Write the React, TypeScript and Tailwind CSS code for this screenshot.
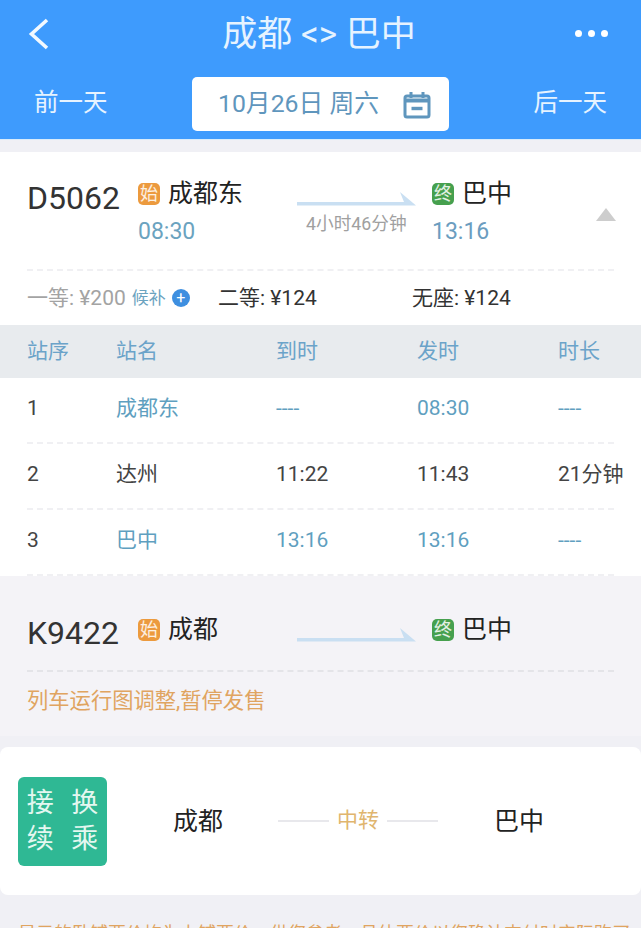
const FONT = "font-['Roboto','Noto_Sans_CJK_SC',sans-serif]";

function Badge({ label, color }: { label: string; color: string }) {
  return (
    <span
      className={`flex h-[22px] w-[22px] items-center justify-center rounded-[5px] text-[18px] leading-none text-white/85 ${color}`}
    >
      {label}
    </span>
  );
}

function Arrow() {
  return (
    <svg width="120" height="16" viewBox="0 0 120 16" className="block">
      <path d="M0 12H107L103 2L119 15.5H0Z" fill="#c9dff2" />
    </svg>
  );
}

function BackIcon() {
  return (
    <svg width="22" height="32" viewBox="0 0 22 32" fill="none" className="block">
      <path d="M19 2L3.5 16L19 30" stroke="#f2f9ff" strokeWidth="3.6" />
    </svg>
  );
}

function CalendarIcon() {
  return (
    <svg width="28" height="28" viewBox="0 0 28 28" fill="none" className="block">
      <rect x="2" y="5" width="24" height="21" rx="2" stroke="#5f96bd" strokeWidth="3" />
      <path d="M2 9.5H26" stroke="#5f96bd" strokeWidth="4" />
      <path d="M8 1V7M20 1V7" stroke="#5f96bd" strokeWidth="3" />
      <path d="M8.5 17.5H19.5" stroke="#5f96bd" strokeWidth="3.4" />
    </svg>
  );
}

function Dashed() {
  return <div className="mx-[27px] border-t-2 border-dashed border-[#f0f0f3]" />;
}

const stops = [
  { no: "1", name: "成都东", arrive: "----", depart: "08:30", stay: "----", first: true },
  { no: "2", name: "达州", arrive: "11:22", depart: "11:43", stay: "21分钟", first: false },
  { no: "3", name: "巴中", arrive: "13:16", depart: "13:16", stay: "----", first: true },
];

export default function App() {
  return (
    <div className={`h-[928px] w-[641px] overflow-hidden bg-[#f0f0f5] ${FONT}`}>
      {/* Header */}
      <div className="h-[140px] border-b border-[#d8ecfb] bg-[#3e9bfd] text-white">
        <div className="grid h-[77px] grid-cols-[1fr_auto_1fr] items-center px-[33px]">
          <div className="-ml-[5px] -mt-[10px]">
            <BackIcon />
          </div>
          <div className="-ml-[3px] -mt-[8px] text-[35px] leading-none text-[#e6f3ff]">成都 &lt;&gt; 巴中</div>
          <div className="-mt-[10px] flex justify-end gap-[6px]">
            <span className="h-[7px] w-[7px] rounded-full bg-white" />
            <span className="h-[7px] w-[7px] rounded-full bg-white" />
            <span className="h-[7px] w-[7px] rounded-full bg-white" />
          </div>
        </div>
        <div className="flex items-start justify-between px-[34px] text-[#e6f3ff]">
          <span className="mt-[11px] text-[24.5px] leading-[30px]">前一天</span>
          <div className="flex h-[54px] w-[257px] items-center rounded-[5px] bg-white pl-[26px] text-[24.8px] leading-none text-[#5f96bd]">
            <span>10月26日 周六</span>
            <span className="ml-[24px] mt-[2px]">
              <CalendarIcon />
            </span>
          </div>
          <span className="mt-[11px] text-[24.5px] leading-[30px]">后一天</span>
        </div>
      </div>

      {/* D5062 */}
      <div className="mt-[12px] bg-white">
        <div className="grid h-[117px] grid-cols-[111px_159px_135px_1fr] pl-[27px]">
          <div className="pt-[27px] text-[32px] leading-[38px] text-[#333]">D5062</div>
          <div className="pt-[27px]">
            <div className="flex items-center gap-[8px] text-[25px] leading-[30px] text-[#222]">
              <Badge label="始" color="bg-[#ec9a3e]" />
              成都东
            </div>
            <div className="mt-[9px] text-[23px] leading-[28px] text-[#6ba3bf]">08:30</div>
          </div>
          <div className="pt-[38px]">
            <Arrow />
            <div className="mt-[7px] text-[17.7px] leading-[22px] text-[#a0a0a0]">
              <span className="ml-[9px]">4小时46分钟</span>
            </div>
          </div>
          <div className="relative pt-[27px]">
            <div className="flex items-center gap-[8px] text-[25px] leading-[30px] text-[#222]">
              <Badge label="终" color="bg-[#46a04e]" />
              巴中
            </div>
            <div className="mt-[9px] text-[23px] leading-[28px] text-[#6b9dbf]">13:16</div>
            <div className="absolute right-[25px] top-[56px] h-0 w-0 border-x-[10px] border-b-[13px] border-x-transparent border-b-[#cdcdcd]" />
          </div>
        </div>
        <Dashed />
        <div className="grid h-[54px] grid-cols-[191px_194px_1fr] items-center pl-[27px] text-[21px] leading-none">
          <div className="flex items-center text-[#a3a3a3]">
            <span>一等: ¥200</span>
            <span className="ml-[6px] text-[17px] text-[#6ba3bf]">候补</span>
            <span className="ml-[6px] flex h-[18px] w-[18px] items-center justify-center rounded-full bg-[#3e8fe0] text-[16px] leading-none text-white">
              +
            </span>
          </div>
          <div className="text-[#333]">二等: ¥124</div>
          <div className="text-[#333]">无座: ¥124</div>
        </div>

        {/* Stops table */}
        <div className="grid h-[53px] grid-cols-[89px_160px_141px_141px_1fr] items-center bg-[#e8ebee] pl-[27px] text-[21px] text-[#6ba3c9]">
          <span>站序</span>
          <span>站名</span>
          <span>到时</span>
          <span>发时</span>
          <span>时长</span>
        </div>
        {stops.map((stop) => (
          <div key={stop.no}>
            <div className="grid h-[64px] grid-cols-[89px_160px_141px_141px_1fr] items-center pb-[3px] pl-[27px] text-[21px] text-[#444]">
              <span>{stop.no}</span>
              <span className={stop.first ? "text-[#5f9fc0]" : ""}>{stop.name}</span>
              <span className={stop.first ? "text-[#5f9fc0]" : ""}>{stop.arrive}</span>
              <span className={stop.first ? "text-[#5f9fc0]" : ""}>{stop.depart}</span>
              <span className={stop.first ? "text-[#5f9fc0]" : ""}>{stop.stay}</span>
            </div>
            <Dashed />
          </div>
        ))}
      </div>

      {/* K9422 */}
      <div className="h-[160px] bg-[#f4f3f7]">
        <div className="grid h-[94px] grid-cols-[111px_159px_135px_1fr] pl-[27px]">
          <div className="pt-[38px] text-[32px] leading-[38px] text-[#333]">K9422</div>
          <div className="pt-[39px]">
            <div className="flex items-center gap-[8px] text-[25px] leading-[30px] text-[#222]">
              <Badge label="始" color="bg-[#ec9a3e]" />
              成都
            </div>
          </div>
          <div className="pt-[50px]">
            <Arrow />
          </div>
          <div className="pt-[39px]">
            <div className="flex items-center gap-[8px] text-[25px] leading-[30px] text-[#222]">
              <Badge label="终" color="bg-[#46a04e]" />
              巴中
            </div>
          </div>
        </div>
        <div className="mx-[27px] border-t-2 border-dashed border-[#e4e4e8]" />
        <div className="pl-[27px] pt-[15px] text-[21.3px] leading-[28px] text-[#e0a460]">列车运行图调整,暂停发售</div>
      </div>

      {/* Transfer */}
      <div className="mt-[11px] flex h-[148px] items-center rounded-[8px] bg-white pl-[18px]">
        <div className="grid h-[89px] w-[89px] grid-cols-2 content-center justify-items-center gap-y-[3px] rounded-[6px] bg-[#2fb894] text-[27px] leading-[33px] text-[#e4f7f0]">
          <span>接</span>
          <span>换</span>
          <span>续</span>
          <span>乘</span>
        </div>
        <div className="ml-[66px] w-[50px] text-[25px] leading-none text-[#222]">成都</div>
        <span className="ml-[55px] h-[2px] w-[51px] bg-[#e8e8ec]" />
        <span className="mx-[8px] w-[42px] whitespace-nowrap text-[21px] text-[#e0b56e]">中转</span>
        <span className="h-[2px] w-[51px] bg-[#e8e8ec]" />
        <div className="ml-[56px] text-[25px] leading-none text-[#222]">巴中</div>
      </div>

      <div className="mt-[27px] whitespace-nowrap pl-[18px] text-[18px] leading-[24px] text-[#e0a460]">
        显示的卧铺票价均为上铺票价，供您参考，具体票价以您确认支付时实际购买
      </div>
    </div>
  );
}
